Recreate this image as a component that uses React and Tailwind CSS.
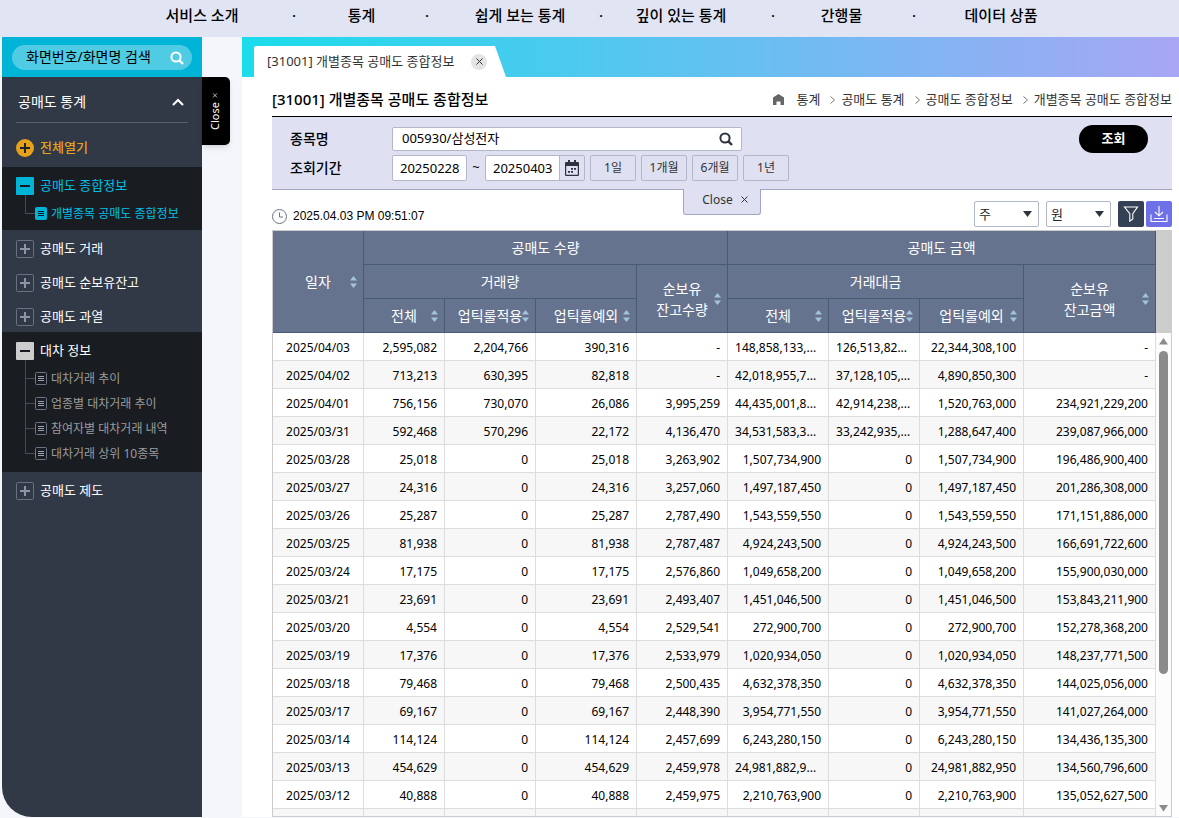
import { useState } from 'react'

const navItems = [
  { label: '서비스 소개', className: '' },
  { label: '통계', className: 'pl-0.5' },
  { label: '쉽게 보는 통계', className: 'pl-3' },
  { label: '깊이 있는 통계', className: 'pr-3' },
  { label: '간행물', className: 'pr-1' },
  { label: '데이터 상품', className: 'pr-1' },
]

const breadcrumb = ['통계', '공매도 통계', '공매도 종합정보', '개별종목 공매도 종합정보']

const rows = [
  ['2025/04/03', '2,595,082', '2,204,766', '390,316', '-', '148,858,133,...', '126,513,82...', '22,344,308,100', '-'],
  ['2025/04/02', '713,213', '630,395', '82,818', '-', '42,018,955,7...', '37,128,105,...', '4,890,850,300', '-'],
  ['2025/04/01', '756,156', '730,070', '26,086', '3,995,259', '44,435,001,8...', '42,914,238,...', '1,520,763,000', '234,921,229,200'],
  ['2025/03/31', '592,468', '570,296', '22,172', '4,136,470', '34,531,583,3...', '33,242,935,...', '1,288,647,400', '239,087,966,000'],
  ['2025/03/28', '25,018', '0', '25,018', '3,263,902', '1,507,734,900', '0', '1,507,734,900', '196,486,900,400'],
  ['2025/03/27', '24,316', '0', '24,316', '3,257,060', '1,497,187,450', '0', '1,497,187,450', '201,286,308,000'],
  ['2025/03/26', '25,287', '0', '25,287', '2,787,490', '1,543,559,550', '0', '1,543,559,550', '171,151,886,000'],
  ['2025/03/25', '81,938', '0', '81,938', '2,787,487', '4,924,243,500', '0', '4,924,243,500', '166,691,722,600'],
  ['2025/03/24', '17,175', '0', '17,175', '2,576,860', '1,049,658,200', '0', '1,049,658,200', '155,900,030,000'],
  ['2025/03/21', '23,691', '0', '23,691', '2,493,407', '1,451,046,500', '0', '1,451,046,500', '153,843,211,900'],
  ['2025/03/20', '4,554', '0', '4,554', '2,529,541', '272,900,700', '0', '272,900,700', '152,278,368,200'],
  ['2025/03/19', '17,376', '0', '17,376', '2,533,979', '1,020,934,050', '0', '1,020,934,050', '148,237,771,500'],
  ['2025/03/18', '79,468', '0', '79,468', '2,500,435', '4,632,378,350', '0', '4,632,378,350', '144,025,056,000'],
  ['2025/03/17', '69,167', '0', '69,167', '2,448,390', '3,954,771,550', '0', '3,954,771,550', '141,027,264,000'],
  ['2025/03/14', '114,124', '0', '114,124', '2,457,699', '6,243,280,150', '0', '6,243,280,150', '134,436,135,300'],
  ['2025/03/13', '454,629', '0', '454,629', '2,459,978', '24,981,882,9...', '0', '24,981,882,950', '134,560,796,600'],
  ['2025/03/12', '40,888', '0', '40,888', '2,459,975', '2,210,763,900', '0', '2,210,763,900', '135,052,627,500'],
  ['', '', '', '', '', '', '', '', ''],
]

function SearchIcon({ className }) {
  return (
    <svg viewBox="0 0 14 14" className={className} fill="none" stroke="currentColor" strokeWidth="2">
      <circle cx="6" cy="6" r="4.6" />
      <path d="M9.4 9.4L13 13" strokeWidth="2.4" />
    </svg>
  )
}

function CrossIcon({ className }) {
  return (
    <svg viewBox="0 0 7 7" className={className} fill="none" stroke="currentColor">
      <path d="M0.5 0.5L6.5 6.5M6.5 0.5L0.5 6.5" />
    </svg>
  )
}

function MenuIcon({ kind }) {
  if (kind === 'plus') {
    return (
      <svg viewBox="0 0 18 18" className="size-[18px] shrink-0">
        <rect x="0.5" y="0.5" width="17" height="17" rx="1" fill="none" stroke="#6a7282" />
        <path d="M9 4v10M4 9h10" stroke="#8d95a5" strokeWidth="2" />
      </svg>
    )
  }
  return (
    <svg viewBox="0 0 18 18" className="relative z-10 size-[18px] shrink-0">
      <rect width="18" height="18" rx="1" fill={kind === 'active' ? '#00b4d8' : '#cccccc'} />
      <path d="M4 9h10" stroke="#15191f" strokeWidth="2" />
    </svg>
  )
}

function PageIcon({ active }) {
  return (
    <svg viewBox="0 0 12 13" className="relative z-10 h-[13px] w-3 shrink-0">
      <rect x="0.5" y="0.5" width="11" height="12" rx="1" fill={active ? '#00b4d8' : '#191d22'} stroke={active ? '#00b4d8' : '#6a7387'} />
      <path d="M3 4.5h6M3 6.5h6M3 8.5h6" stroke={active ? '#0b1c24' : '#9aa1b0'} />
    </svg>
  )
}

function MenuItem({ kind = 'plus', children }) {
  return (
    <a
      href="#"
      className={`flex items-center gap-1.5 pl-3.5 text-[13px] ${kind === 'plus' ? 'h-[34px] pt-1' : 'h-[30px]'} ${
        kind === 'active' ? 'text-[#00c0e8]' : 'text-white'
      }`}
    >
      <MenuIcon kind={kind} />
      {children}
    </a>
  )
}

function SubItem({ active, children }) {
  return (
    <li className="relative">
      <span className="absolute -top-3 left-[23px] h-[25px] w-2.5 border-b border-l border-[#454c56]" />
      <a
        href="#"
        className={`flex h-[25px] items-center gap-1 pl-[33px] text-[12px] ${active ? 'text-[#00c0e8]' : 'text-[#9b9b9b]'}`}
      >
        <PageIcon active={active} />
        {children}
      </a>
    </li>
  )
}

function Sidebar() {
  return (
    <aside className="flex w-[200px] shrink-0 flex-col overflow-hidden rounded-bl-[30px] bg-[#323946]">
      <div className="bg-[#00b4d8] px-2.5 pt-2 pb-[7px]">
        <div className="flex h-[25px] items-center rounded-full bg-[#4fcbe3] pr-2 pl-3.5">
          <input
            type="text"
            aria-label="화면 검색"
            placeholder="화면번호/화면명 검색"
            className="w-full min-w-0 pb-0.5 text-[14px] text-black outline-none placeholder:text-black"
          />
          <button type="button" aria-label="검색" className="text-white">
            <SearchIcon className="size-3.5" />
          </button>
        </div>
      </div>
      <div className="mx-3.5 border-b border-[#58606e]">
        <button type="button" className="flex h-[45px] w-full items-center justify-between pt-1 pr-1 pl-0.5 text-[14px] text-white">
          공매도 통계
          <svg viewBox="0 0 12 8" className="h-2 w-3" fill="none" stroke="white" strokeWidth="2">
            <path d="M1 7L6 2L11 7" />
          </svg>
        </button>
      </div>
      <button type="button" className="flex h-11 items-center gap-1.5 pt-1.5 pl-3.5 text-[13px] font-medium text-[#e6a11b]">
        <svg viewBox="0 0 18 18" className="size-[18px]">
          <circle cx="9" cy="9" r="9" fill="#e6a11b" />
          <path d="M9 4v10M4 9h10" stroke="#1c222c" strokeWidth="2" />
        </svg>
        전체열기
      </button>
      <nav>
        <div className="bg-[#191d22] pt-1 pb-1">
          <MenuItem kind="active">공매도 종합정보</MenuItem>
          <ul>
            <SubItem active>개별종목 공매도 종합정보</SubItem>
          </ul>
        </div>
        <MenuItem>공매도 거래</MenuItem>
        <MenuItem>공매도 순보유잔고</MenuItem>
        <MenuItem>공매도 과열</MenuItem>
        <div className="bg-[#191d22] pt-1 pb-1.5">
          <MenuItem kind="open">대차 정보</MenuItem>
          <ul>
            <SubItem>대차거래 추이</SubItem>
            <SubItem>업종별 대차거래 추이</SubItem>
            <SubItem>참여자별 대차거래 내역</SubItem>
            <SubItem>대차거래 상위 10종목</SubItem>
          </ul>
        </div>
        <MenuItem>공매도 제도</MenuItem>
      </nav>
    </aside>
  )
}

function FilterPanel() {
  const [stock, setStock] = useState('005930/삼성전자')
  const [from, setFrom] = useState('20250228')
  const [to, setTo] = useState('20250403')

  return (
    <form
      onSubmit={(e) => e.preventDefault()}
      className="relative flex items-start justify-between border-t border-b border-t-black border-b-[#a0a5c3] bg-[#dfe1f2] pt-2.5 pr-6 pb-2 pl-[18px]"
    >
      <div className="grid grid-cols-[102px_auto] gap-y-1">
        <label htmlFor="stock" className="flex items-center pb-0.5 text-[14px] font-medium">
          종목명
        </label>
        <div className="flex h-6 w-[350px] items-center rounded-[2px] border border-[#b3b7ca] bg-white pr-2 pl-[9px]">
          <input
            id="stock"
            type="text"
            value={stock}
            onChange={(e) => setStock(e.target.value)}
            className="w-full min-w-0 text-[13px] outline-none"
          />
          <button type="button" aria-label="종목 검색" className="text-[#2d3440]">
            <SearchIcon className="size-3.5" />
          </button>
        </div>
        <label htmlFor="from" className="flex items-center pb-0.5 text-[14px] font-medium">
          조회기간
        </label>
        <div className="flex items-center">
          <input
            id="from"
            type="text"
            value={from}
            onChange={(e) => setFrom(e.target.value)}
            className="h-[26px] w-[75px] rounded-[2px] border border-[#b3b7ca] bg-white px-[7px] text-[13px]"
          />
          <span className="w-[18px] text-center text-[13px]">~</span>
          <input
            type="text"
            aria-label="종료일"
            value={to}
            onChange={(e) => setTo(e.target.value)}
            className="h-[26px] w-[75px] rounded-l-[2px] border border-[#b3b7ca] bg-white px-[7px] text-[13px]"
          />
          <button
            type="button"
            aria-label="달력"
            className="-ml-px flex h-[26px] w-[26px] items-center justify-center rounded-r-[2px] border border-[#b3b7ca]"
          >
            <svg viewBox="0 0 14 16" className="h-4 w-3.5" fill="#2d3440" fillRule="evenodd">
              <path d="M3 0h2v2h4V0h2v2h2a1 1 0 0 1 1 1v12a1 1 0 0 1-1 1H1a1 1 0 0 1-1-1V3a1 1 0 0 1 1-1h2zM1.2 6v8.8h11.6V6z" />
              <path d="M6 8h2v1.8H6zM9 8h2v1.8H9zM3 11h2v1.8H3zM6 11h2v1.8H6z" />
            </svg>
          </button>
          <div className="ml-[5px] flex gap-[5px]">
            {['1일', '1개월', '6개월', '1년'].map((label) => (
              <button
                key={label}
                type="button"
                className="h-[26px] w-[46px] rounded-[2px] border border-[#b3b7ca] text-[12px] text-[#333333]"
              >
                {label}
              </button>
            ))}
          </div>
        </div>
      </div>
      <button type="submit" className="-mt-0.5 h-7 w-[69px] rounded-full bg-black text-[13px] font-bold text-white">
        조회
      </button>
      <button
        type="button"
        className="absolute top-full left-1/2 flex h-[26px] w-[78px] -translate-x-1/2 items-center justify-center gap-2 rounded-b-[3px] border border-t-0 border-[#a0a5c3] bg-[#dfe1f2] pb-1 pl-1.5 text-[12px] text-[#333333]"
      >
        Close
        <CrossIcon className="size-[7px]" />
      </button>
    </form>
  )
}

function UnitSelect({ label, unit }) {
  return (
    <div className="relative">
      <select
        aria-label={label}
        defaultValue={unit}
        className="h-[26px] w-[65px] appearance-none rounded-[2px] border border-[#b3b7ca] bg-white pl-1 text-[13px] text-[#222222]"
      >
        <option>{unit}</option>
      </select>
      <svg viewBox="0 0 9 6" className="pointer-events-none absolute top-2.5 right-[7px] h-1.5 w-[9px]" fill="#2d3440">
        <path d="M0 0h9L4.5 6z" />
      </svg>
    </div>
  )
}

function Toolbar() {
  return (
    <div className="flex h-10 items-center justify-between">
      <div className="flex items-center gap-1.5 pt-3 font-['Liberation_Sans','Noto_Sans_CJK_KR',sans-serif] text-[12px]">
        <svg viewBox="0 0 15 15" className="size-[15px]" fill="none" stroke="#6b7482">
          <circle cx="7.5" cy="7.5" r="7" />
          <path d="M7.5 3.5v4.5h3.5" />
        </svg>
        2025.04.03 PM 09:51:07
      </div>
      <div className="flex items-center gap-[7px] pt-2">
        <UnitSelect label="수량 단위" unit="주" />
        <UnitSelect label="금액 단위" unit="원" />
        <div className="flex gap-0.5">
          <button type="button" aria-label="필터" className="flex size-[26px] items-center justify-center rounded-[2px] bg-[#344054]">
            <svg viewBox="0 0 16 16" className="size-4" fill="none" stroke="white" strokeWidth="1.1">
              <path d="M1.5 1h13L9.8 7.6V13l-3 2.2V7.6z" />
            </svg>
          </button>
          <button type="button" aria-label="다운로드" className="flex size-[26px] items-center justify-center rounded-[2px] bg-[#6e70e8]">
            <svg viewBox="0 0 18 16" className="h-4 w-[18px]" fill="none" stroke="white" strokeWidth="1.1">
              <path d="M9 0v9.5M5 6l4 3.8L13 6M4 12.5h10M1 8.5v7h16v-7" />
            </svg>
          </button>
        </div>
      </div>
    </div>
  )
}

function HeadCell({ sortable, children, ...props }) {
  return (
    <th
      {...props}
      className="relative border-r border-b border-[#485a77] bg-[#66738f] p-0 text-center text-[14px] leading-[21px] font-normal text-white"
    >
      {children}
      {sortable && (
        <svg viewBox="0 0 7 12" className="absolute top-1/2 right-1.5 h-3 w-[7px] -translate-y-1/2" fill="#a3c4dc">
          <path d="M3.5 0L7 4.5H0zM3.5 12L0 7.5h7z" />
        </svg>
      )}
    </th>
  )
}

function DataTable() {
  return (
    <div className="flex min-h-0 flex-1 overflow-hidden border border-[#cccccc]">
      <div className="min-w-0 flex-1">
        <table className="w-full table-fixed border-separate border-spacing-0">
          <colgroup>
            <col className="w-[91px]" />
            <col className="w-[81px]" />
            <col className="w-[91px]" />
            <col className="w-[101px]" />
            <col className="w-[91px]" />
            <col className="w-[101px]" />
            <col className="w-[91px]" />
            <col className="w-[104px]" />
            <col />
          </colgroup>
          <thead>
            <tr className="h-[34px]">
              <HeadCell rowSpan={3} sortable>일자</HeadCell>
              <HeadCell colSpan={4}>공매도 수량</HeadCell>
              <HeadCell colSpan={4}>공매도 금액</HeadCell>
            </tr>
            <tr className="h-[34px]">
              <HeadCell colSpan={3}>거래량</HeadCell>
              <HeadCell rowSpan={2} sortable>순보유<br />잔고수량</HeadCell>
              <HeadCell colSpan={3}>거래대금</HeadCell>
              <HeadCell rowSpan={2} sortable>순보유<br />잔고금액</HeadCell>
            </tr>
            <tr className="h-[34px]">
              <HeadCell sortable>전체</HeadCell>
              <HeadCell sortable>업틱룰적용</HeadCell>
              <HeadCell sortable>업틱룰예외</HeadCell>
              <HeadCell sortable>전체</HeadCell>
              <HeadCell sortable>업틱룰적용</HeadCell>
              <HeadCell sortable>업틱룰예외</HeadCell>
            </tr>
          </thead>
          <tbody className="text-[12px] leading-4">
            {rows.map((row, i) => (
              <tr key={i} className="h-7 even:bg-[#f7f7f7]">
                {row.map((cell, j) => (
                  <td
                    key={j}
                    className={`border-r border-b border-[#dddddd] px-[7px] pt-0.5 pb-0 whitespace-nowrap ${
                      j === 0 ? 'text-center' : cell.endsWith('...') ? 'text-left' : 'text-right'
                    }`}
                  >
                    {cell}
                  </td>
                ))}
              </tr>
            ))}
          </tbody>
        </table>
      </div>
      <div className="flex w-[15px] shrink-0 flex-col items-center bg-[#fcfcfc]">
        <div className="h-[102px] w-full bg-[#cccccc]" />
        <svg viewBox="0 0 9 7" className="mt-[5px] h-[7px] w-[9px] shrink-0" fill="#8b8b8b">
          <path d="M4.5 0L9 6.5H0z" />
        </svg>
        <div className="my-1.5 w-full flex-1">
          <div className="mx-auto h-[72%] w-[9px] rounded-full bg-[#8b8b8b]" />
        </div>
        <svg viewBox="0 0 9 7" className="mb-1 h-[7px] w-[9px] shrink-0" fill="#8b8b8b">
          <path d="M0 0h9L4.5 6.5z" />
        </svg>
      </div>
    </div>
  )
}

export default function App() {
  return (
    <div className="flex h-screen flex-col bg-[#f5f6fc] font-['Noto_Sans','Noto_Sans_CJK_KR',sans-serif] text-black">
      <header className="bg-[#e1e4f3] pr-[87px] pl-[110px]">
        <ul className="grid h-[37px] grid-cols-[184fr_133fr_174fr_172fr_141fr_178fr] pb-1.5 text-[15px] font-medium">
          {navItems.map((item, i) => (
            <li key={item.label} className={`relative flex items-center justify-center ${item.className}`}>
              <a href="#">{item.label}</a>
              {i < navItems.length - 1 && <span className="absolute -right-0.5">·</span>}
            </li>
          ))}
        </ul>
      </header>

      <div className="flex min-h-0 flex-1 pb-px pl-0.5">
        <Sidebar />
        <div className="w-10 shrink-0 pt-10">
          <button
            type="button"
            className="flex h-[68px] w-7 items-center justify-center rounded-r-[5px] bg-black pr-0.5 text-[11px] text-white shadow-md"
          >
            <span className="flex rotate-180 items-center gap-1 [writing-mode:vertical-rl]">
              Close
              <CrossIcon className="size-[5px]" />
            </span>
          </button>
        </div>

        <main className="flex min-w-0 flex-1 flex-col bg-white">
          <div className="flex h-10 items-end bg-linear-to-r/srgb from-[#1bdcec] to-[#a8a6f5] pl-3">
            <div className="flex h-[31px] min-w-[241px] items-center justify-between rounded-tl-[2px] bg-white pr-2 pl-[13px] text-[13px] text-[#333333]">
              [31001] 개별종목 공매도 종합정보
              <button type="button" aria-label="탭 닫기" className="flex size-4 items-center justify-center rounded-full bg-[#e4e4e4]">
                <CrossIcon className="size-[7px]" />
              </button>
            </div>
            <svg viewBox="0 0 11 31" className="h-[31px] w-[11px]" fill="white">
              <path d="M0 0L11 31H0z" />
            </svg>
          </div>

          <div className="flex min-h-0 flex-1 flex-col pr-[7px] pl-[30px]">
            <div className="flex h-[39px] items-center justify-between pt-1.5">
              <h1 className="text-[15px] font-medium">[31001] 개별종목 공매도 종합정보</h1>
              <ol className="flex items-center text-[13px] text-[#333333]">
                <li>
                  <a href="#" aria-label="홈">
                    <svg viewBox="0 0 11 11" className="mr-3 h-[11px] w-[11px]" fill="#666666">
                      <path d="M5.5 0L11 3.6V11H7.5V7.5h-4V11H0V3.6z" />
                    </svg>
                  </a>
                </li>
                {breadcrumb.map((name, i) => (
                  <li key={name} className="flex items-center">
                    {i > 0 && (
                      <svg viewBox="0 0 5 8" className="mr-1.5 ml-2.5 h-2 w-[5px]" fill="none" stroke="#777777">
                        <path d="M0.5 0.5L4.5 4L0.5 7.5" />
                      </svg>
                    )}
                    {name}
                  </li>
                ))}
              </ol>
            </div>
            <FilterPanel />
            <Toolbar />
            <DataTable />
          </div>
        </main>
      </div>
    </div>
  )
}
